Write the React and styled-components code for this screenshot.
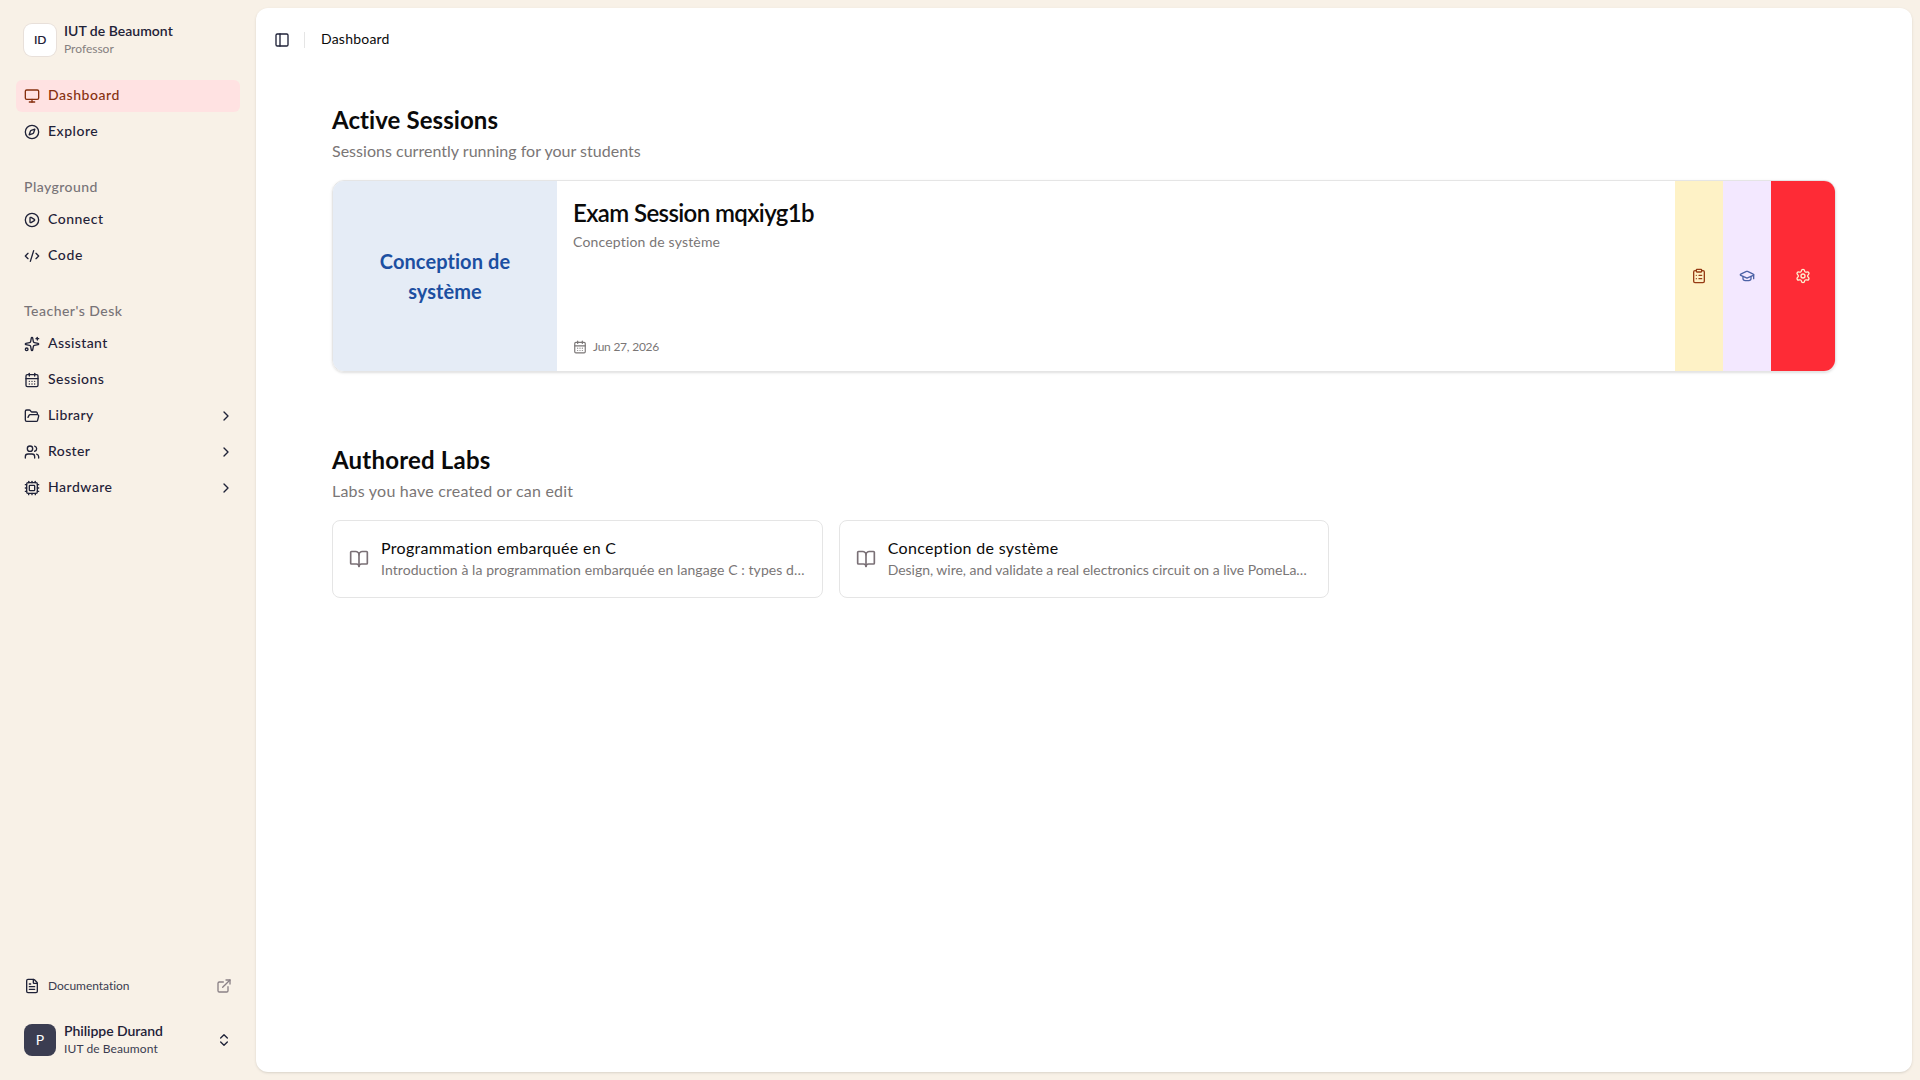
import React from 'react';
import styled, { createGlobalStyle } from 'styled-components';
import {
  BookOpen,
  CalendarDays,
  ChevronRight,
  ChevronsUpDown,
  CirclePlay,
  ClipboardList,
  CodeXml,
  Compass,
  Cpu,
  ExternalLink,
  FileText,
  FolderOpen,
  GraduationCap,
  Monitor,
  PanelLeft,
  Settings,
  Sparkles,
  Users,
} from 'lucide-react';

const GlobalStyle = createGlobalStyle`
  *, *::before, *::after {
    box-sizing: border-box;
  }

  body {
    margin: 0;
    background: #f8f1e7;
    color: #0a0a0a;
    font-family: 'Lato', sans-serif;
    font-size: 14px;
    font-variant-ligatures: none;
  }

  h1, h2, h3, p {
    margin: 0;
  }

  button {
    font: inherit;
    color: inherit;
    border: none;
    background: none;
    padding: 0;
    cursor: pointer;
  }
`;

// Letter spacing in px, tuned for each label
const Text = styled.span`
  letter-spacing: ${props => props.$tracking || 0}px;
`;

const Layout = styled.div`
  display: flex;
  height: 100vh;
  overflow: hidden;
`;

const Sidebar = styled.aside`
  width: 256px;
  flex-shrink: 0;
  padding: 16px;
  display: flex;
  flex-direction: column;
  color: #1f2238;
`;

const Account = styled.button`
  display: flex;
  align-items: center;
  gap: 8px;
  height: 48px;
  padding: 0 8px;
  width: 100%;
  text-align: left;
`;

const Avatar = styled.div`
  width: 32px;
  height: 32px;
  padding-bottom: 2px;
  border-radius: 8px;
  display: flex;
  align-items: center;
  justify-content: center;
  font-size: ${props => (props.$dark ? 14 : 12)}px;
  flex-shrink: 0;
  background: ${props => (props.$dark ? '#3b3d51' : '#ffffff')};
  color: ${props => (props.$dark ? '#ffffff' : '#1f2238')};
  font-weight: ${props => (props.$dark ? 400 : 600)};
  letter-spacing: ${props => (props.$dark ? 0 : -0.4)}px;
  box-shadow: ${props => (props.$dark ? 'none' : '0 0 0 1px #e8e0da')};
`;

const AccountText = styled.div`
  flex: 1;
  display: grid;
`;

const AccountName = styled(Text)`
  font-size: 14px;
  line-height: 16px;
  padding-bottom: 2px;
  font-weight: 600;
`;

const AccountRole = styled(Text)`
  font-size: 12px;
  line-height: 16px;
  color: ${props => (props.$muted ? '#85807f' : '#3a3c50')};
`;

const Nav = styled.nav`
  flex: 1;
  padding-top: 16px;
  display: flex;
  flex-direction: column;
  gap: 24px;
`;

const NavGroup = styled.div`
  display: flex;
  flex-direction: column;
`;

const GroupLabel = styled.div`
  height: 32px;
  padding: 0 8px 3px;
  display: flex;
  align-items: center;
  font-weight: 500;
  color: #787478;
`;

const NavList = styled.div`
  display: flex;
  flex-direction: column;
  gap: 4px;
`;

const NavItem = styled.button`
  display: flex;
  align-items: center;
  gap: 8px;
  height: 32px;
  padding: 0 6px 0 8px;
  border-radius: 6px;
  font-weight: 500;
  line-height: 20px;
  background: ${props => (props.$active ? '#ffe2e2' : 'transparent')};
  color: ${props => (props.$active ? '#86300f' : 'inherit')};

  ${Text} {
    flex: 1;
    padding-bottom: 2px;
    text-align: left;
  }

  &:hover {
    background: #ffe2e2;
  }
`;

const DocsLink = styled.button`
  display: flex;
  align-items: center;
  gap: 8px;
  height: 32px;
  padding: 0 8px;
  margin-bottom: 14px;
  font-size: 12px;
  color: #1f2238;

  ${Text} {
    flex: 1;
    padding-bottom: 1px;
    text-align: left;
    color: #3a3c50;
  }

  svg:last-child {
    color: #8a8186;
  }
`;

const Main = styled.main`
  flex: 1;
  min-width: 0;
  margin: 8px 8px 8px 0;
  background: #ffffff;
  border-radius: 12px;
  box-shadow: 0 1px 3px rgba(0, 0, 0, 0.1), 0 1px 2px -1px rgba(0, 0, 0, 0.1);
`;

const Header = styled.header`
  height: 64px;
  padding-left: 18px;
  display: flex;
  align-items: center;
`;

const Breadcrumb = styled(Text)`
  padding-bottom: 3px;
`;

const Divider = styled.div`
  width: 1px;
  height: 16px;
  margin: 0 16px 0 14px;
  background: #e5e5e5;
`;

const ToggleButton = styled.button`
  display: flex;
  color: #1f2238;
`;

const Content = styled.div`
  padding: 32px 76px;
  display: flex;
  flex-direction: column;
  gap: 72px;
`;

const SectionTitle = styled.h2`
  font-size: 24px;
  line-height: 32px;
  font-weight: 700;
  letter-spacing: ${props => props.$tracking || 0}px;
`;

const SectionSubtitle = styled.p`
  margin: 3px 0 17px;
  font-size: 16px;
  line-height: 24px;
  color: #7a7676;
  letter-spacing: ${props => props.$tracking || 0}px;
`;

const SessionCard = styled.article`
  display: flex;
  height: 192px;
  border: 1px solid #e5e5e5;
  border-radius: 12px;
  overflow: hidden;
  box-shadow: 0 1px 3px rgba(0, 0, 0, 0.1), 0 1px 2px -1px rgba(0, 0, 0, 0.1);
`;

const SessionCover = styled.div`
  width: 224px;
  padding: 0 32px;
  display: flex;
  align-items: center;
  justify-content: center;
  text-align: center;
  background: #e5ecf6;
  color: #1c4fa1;
  font-size: 20px;
  line-height: 30px;
  font-weight: 700;
  letter-spacing: 0.08px;
`;

const SessionBody = styled.div`
  flex: 1;
  padding: 16px;
  display: flex;
  flex-direction: column;
`;

const SessionTitle = styled.h3`
  font-size: 24px;
  line-height: 32px;
  font-weight: 600;
  letter-spacing: -0.61px;
`;

const SessionLab = styled.p`
  margin-top: 3px;
  line-height: 20px;
  color: #7a7676;
  letter-spacing: 0.17px;
`;

const SessionDate = styled.div`
  margin-top: auto;
  display: flex;
  align-items: center;
  gap: 6px;
  font-size: 12px;
  line-height: 16px;
  color: #7a7676;
  letter-spacing: -0.24px;
`;

const ActionButton = styled.button`
  width: ${props => props.$width}px;
  display: flex;
  align-items: center;
  justify-content: center;
  background: ${props => props.$background};
  color: ${props => props.$color};

  &:hover {
    opacity: 0.9;
  }
`;

const LabGrid = styled.div`
  display: grid;
  grid-template-columns: repeat(3, minmax(0, 1fr));
  gap: 16px;
`;

const LabCard = styled.article`
  display: flex;
  align-items: center;
  gap: 12px;
  height: 78px;
  padding: 0 16px;
  border: 1px solid #e5e5e5;
  border-radius: 8px;

  svg {
    flex-shrink: 0;
    color: #7a7076;
  }
`;

const LabInfo = styled.div`
  min-width: 0;
  padding-bottom: 2px;
`;

const LabTitle = styled.h3`
  font-size: 16px;
  line-height: 24px;
  font-weight: 400;
  letter-spacing: ${props => props.$tracking || 0}px;
`;

const LabDescription = styled.p`
  line-height: 20px;
  color: #7a7676;
  white-space: nowrap;
  letter-spacing: ${props => props.$tracking || 0}px;
`;

const groups = [
  {
    items: [
      { label: 'Dashboard', icon: Monitor, tracking: 0.55, active: true },
      { label: 'Explore', icon: Compass, tracking: 0.52 },
    ],
  },
  {
    label: 'Playground',
    tracking: 0.45,
    items: [
      { label: 'Connect', icon: CirclePlay, tracking: 0.5 },
      { label: 'Code', icon: CodeXml, tracking: 0.65 },
    ],
  },
  {
    label: "Teacher's Desk",
    tracking: 0.48,
    items: [
      { label: 'Assistant', icon: Sparkles, tracking: 0.4 },
      { label: 'Sessions', icon: CalendarDays, tracking: 0.5 },
      { label: 'Library', icon: FolderOpen, tracking: 0.4, expandable: true },
      { label: 'Roster', icon: Users, tracking: 0.4, expandable: true },
      { label: 'Hardware', icon: Cpu, tracking: 0.5, expandable: true },
    ],
  },
];

const actions = [
  { icon: ClipboardList, label: 'Results', width: 48, background: '#fef2c6', color: '#963c14' },
  { icon: GraduationCap, label: 'Students', width: 48, background: '#f3e8ff', color: '#4c62a6' },
  { icon: Settings, label: 'Settings', width: 64, background: '#fe2b36', color: '#fdf0cf' },
];

const labs = [
  {
    title: 'Programmation embarquée en C',
    titleTracking: 0.3,
    description: 'Introduction à la programmation embarquée en langage C : types d…',
    tracking: 0.08,
  },
  {
    title: 'Conception de système',
    titleTracking: 0.32,
    description: 'Design, wire, and validate a real electronics circuit on a live PomeLa…',
    tracking: -0.03,
  },
];

const App = () => {
  return (
    <>
      <GlobalStyle />
      <Layout>
        <Sidebar>
          <Account>
            <Avatar>ID</Avatar>
            <AccountText>
              <AccountName $tracking={0.02}>IUT de Beaumont</AccountName>
              <AccountRole $muted>Professor</AccountRole>
            </AccountText>
          </Account>

          <Nav>
            {groups.map((group, index) => (
              <NavGroup key={index}>
                {group.label && (
                  <GroupLabel>
                    <Text $tracking={group.tracking}>{group.label}</Text>
                  </GroupLabel>
                )}
                <NavList>
                  {group.items.map(({ label, icon: Icon, tracking, active, expandable }) => (
                    <NavItem key={label} $active={active}>
                      <Icon size={16} />
                      <Text $tracking={tracking}>{label}</Text>
                      {expandable && <ChevronRight size={16} />}
                    </NavItem>
                  ))}
                </NavList>
              </NavGroup>
            ))}
          </Nav>

          <DocsLink>
            <FileText size={16} />
            <Text $tracking={-0.04}>Documentation</Text>
            <ExternalLink size={16} />
          </DocsLink>
          <Account>
            <Avatar $dark>P</Avatar>
            <AccountText>
              <AccountName $tracking={-0.05}>Philippe Durand</AccountName>
              <AccountRole $tracking={0.1}>IUT de Beaumont</AccountRole>
            </AccountText>
            <ChevronsUpDown size={16} />
          </Account>
        </Sidebar>

        <Main>
          <Header>
            <ToggleButton aria-label="Toggle sidebar">
              <PanelLeft size={16} />
            </ToggleButton>
            <Divider />
            <Breadcrumb $tracking={0.22}>Dashboard</Breadcrumb>
          </Header>

          <Content>
            <section>
              <SectionTitle $tracking={0.08}>Active Sessions</SectionTitle>
              <SectionSubtitle $tracking={0.02}>Sessions currently running for your students</SectionSubtitle>
              <SessionCard>
                <SessionCover>Conception de système</SessionCover>
                <SessionBody>
                  <SessionTitle>Exam Session mqxiyg1b</SessionTitle>
                  <SessionLab>Conception de système</SessionLab>
                  <SessionDate>
                    <CalendarDays size={14} />
                    Jun 27, 2026
                  </SessionDate>
                </SessionBody>
                {actions.map(({ icon: Icon, label, width, background, color }) => (
                  <ActionButton
                    key={label}
                    aria-label={label}
                    $width={width}
                    $background={background}
                    $color={color}
                  >
                    <Icon size={16} />
                  </ActionButton>
                ))}
              </SessionCard>
            </section>

            <section>
              <SectionTitle $tracking={0.2}>Authored Labs</SectionTitle>
              <SectionSubtitle $tracking={0.22}>Labs you have created or can edit</SectionSubtitle>
              <LabGrid>
                {labs.map(lab => (
                  <LabCard key={lab.title}>
                    <BookOpen size={20} />
                    <LabInfo>
                      <LabTitle $tracking={lab.titleTracking}>{lab.title}</LabTitle>
                      <LabDescription $tracking={lab.tracking}>{lab.description}</LabDescription>
                    </LabInfo>
                  </LabCard>
                ))}
              </LabGrid>
            </section>
          </Content>
        </Main>
      </Layout>
    </>
  );
};

export default App;
